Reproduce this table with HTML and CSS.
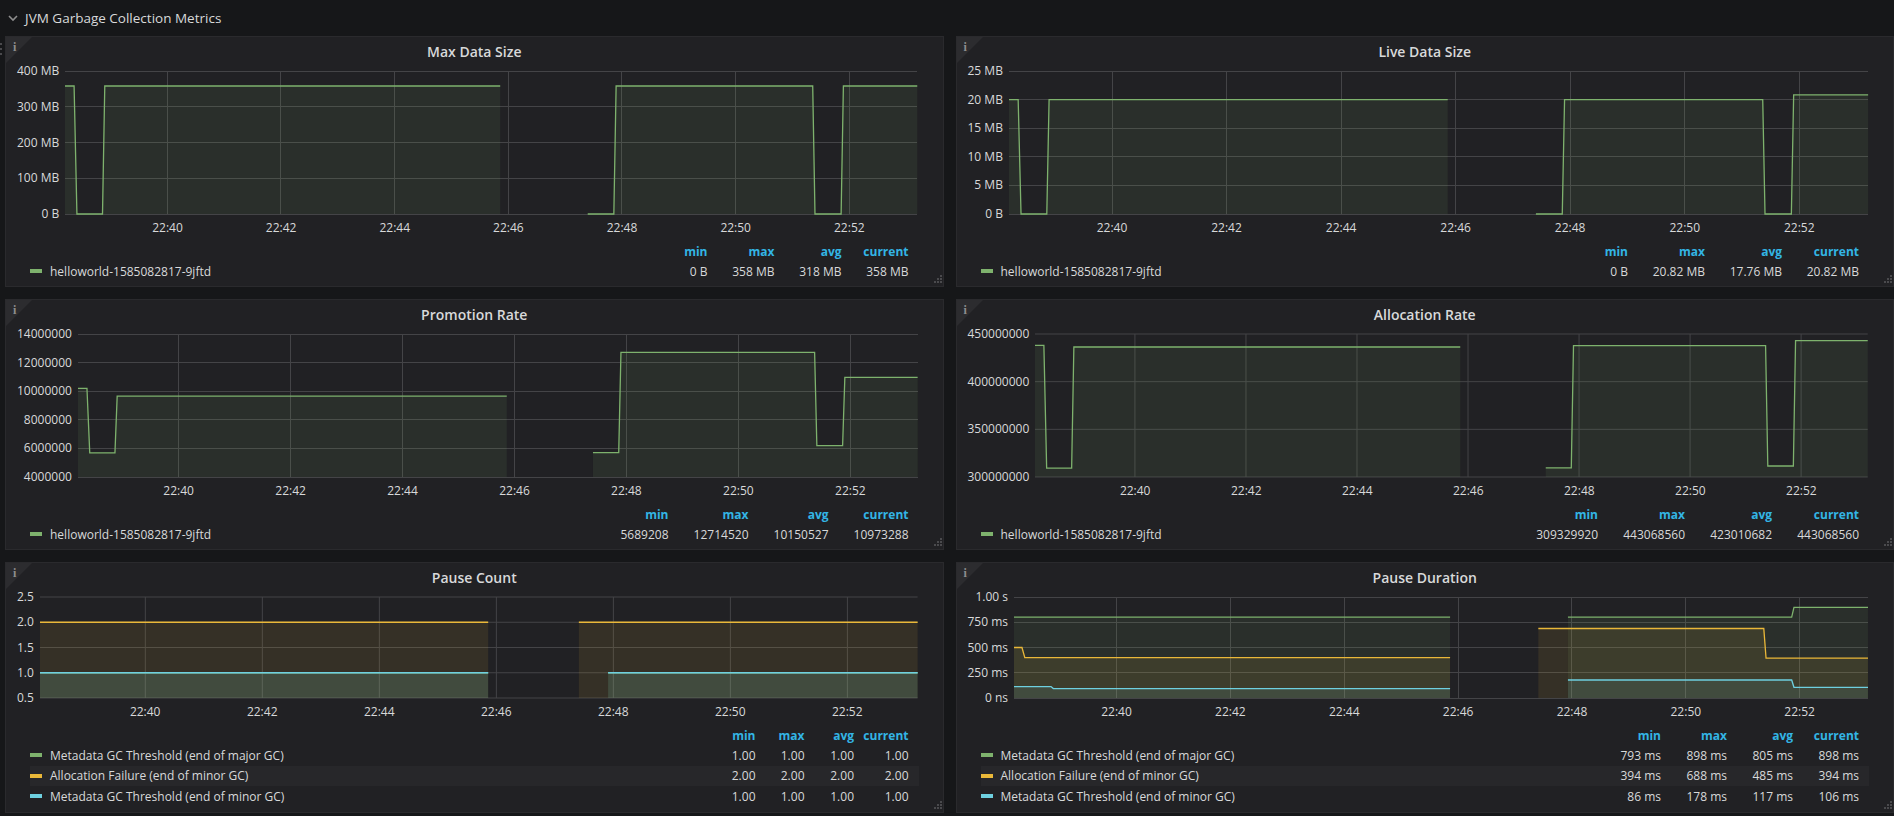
FILE: index.html
```html
<!DOCTYPE html>
<html lang="en">
<head>
<meta charset="utf-8">
<title>JVM Garbage Collection Metrics</title>
<link rel="stylesheet" href="styles.css">
</head>
<body>
<div class="drag-dots"><i></i><i></i><i></i></div>
<div class="row-header">
  <svg class="chevron" width="10" height="7" viewBox="0 0 10 7"><polyline points="1,1 5,5 9,1" fill="none" stroke="#8e8e8e" stroke-width="1.6"/></svg>
  <span class="row-title">JVM Garbage Collection Metrics</span>
</div>

<div class="grid">

  <!-- Max Data Size -->
  <div class="panel">
    <div class="corner"></div><span class="corner-i">i</span>
    <div class="panel-title">Max Data Size</div>
    <div class="chart">
      <div class="yaxis ya143"><span>400 MB</span><span>300 MB</span><span>200 MB</span><span>100 MB</span><span>0 B</span></div>
      <div class="plot">
        <svg class="plot-svg h143" viewBox="0 0 1500 143" preserveAspectRatio="none">
          <path class="grid-lines" d="M0,0H1500M0,35.75H1500M0,71.5H1500M0,107.25H1500M0,143H1500M180,0V143M380,0V143M580,0V143M780,0V143M980,0V143M1180,0V143M1380,0V143"/>
          <path class="fill g" d="M0,143 L0,15 L16,15 L21,143 L66,143 L70,15 L766,15 L766,143 Z M920,143 L966,143 L970,15 L1316,15 L1320,143 L1366,143 L1370,15 L1500,15 L1500,143 Z"/>
          <path class="line g" d="M0,15 L16,15 L21,143 L66,143 L70,15 L766,15 M920,143 L966,143 L970,15 L1316,15 L1320,143 L1366,143 L1370,15 L1500,15"/>
        </svg>
        <div class="xaxis"><span style="left:12%">22:40</span><span style="left:25.333%">22:42</span><span style="left:38.667%">22:44</span><span style="left:52%">22:46</span><span style="left:65.333%">22:48</span><span style="left:78.667%">22:50</span><span style="left:92%">22:52</span></div>
      </div>
    </div>
    <div class="legend w67">
      <div class="lg-row lg-head"><span></span><span>min</span><span>max</span><span>avg</span><span>current</span></div>
      <div class="lg-row"><span class="lg-name"><i class="sw g"></i>helloworld-1585082817-9jftd</span><span>0 B</span><span>358 MB</span><span>318 MB</span><span>358 MB</span></div>
    </div>
    <div class="resize"></div>
  </div>

  <!-- Live Data Size -->
  <div class="panel">
    <div class="corner"></div><span class="corner-i">i</span>
    <div class="panel-title">Live Data Size</div>
    <div class="chart">
      <div class="yaxis ya143"><span>25 MB</span><span>20 MB</span><span>15 MB</span><span>10 MB</span><span>5 MB</span><span>0 B</span></div>
      <div class="plot">
        <svg class="plot-svg h143" viewBox="0 0 1500 143" preserveAspectRatio="none">
          <path class="grid-lines" d="M0,0H1500M0,28.6H1500M0,57.2H1500M0,85.8H1500M0,114.4H1500M0,143H1500M180,0V143M380,0V143M580,0V143M780,0V143M980,0V143M1180,0V143M1380,0V143"/>
          <path class="fill g" d="M0,143 L0,28.6 L16,28.6 L21,143 L66,143 L70,28.6 L766,28.6 L766,143 Z M920,143 L966,143 L970,28.6 L1316,28.6 L1320,143 L1366,143 L1370,23.9 L1500,23.9 L1500,143 Z"/>
          <path class="line g" d="M0,28.6 L16,28.6 L21,143 L66,143 L70,28.6 L766,28.6 M920,143 L966,143 L970,28.6 L1316,28.6 L1320,143 L1366,143 L1370,23.9 L1500,23.9"/>
        </svg>
        <div class="xaxis"><span style="left:12%">22:40</span><span style="left:25.333%">22:42</span><span style="left:38.667%">22:44</span><span style="left:52%">22:46</span><span style="left:65.333%">22:48</span><span style="left:78.667%">22:50</span><span style="left:92%">22:52</span></div>
      </div>
    </div>
    <div class="legend w77">
      <div class="lg-row lg-head"><span></span><span>min</span><span>max</span><span>avg</span><span>current</span></div>
      <div class="lg-row"><span class="lg-name"><i class="sw g"></i>helloworld-1585082817-9jftd</span><span>0 B</span><span>20.82 MB</span><span>17.76 MB</span><span>20.82 MB</span></div>
    </div>
    <div class="resize"></div>
  </div>

  <!-- Promotion Rate -->
  <div class="panel">
    <div class="corner"></div><span class="corner-i">i</span>
    <div class="panel-title">Promotion Rate</div>
    <div class="chart">
      <div class="yaxis ya143"><span>14000000</span><span>12000000</span><span>10000000</span><span>8000000</span><span>6000000</span><span>4000000</span></div>
      <div class="plot">
        <svg class="plot-svg h143" viewBox="0 0 1500 143" preserveAspectRatio="none">
          <path class="grid-lines" d="M0,0H1500M0,28.6H1500M0,57.2H1500M0,85.8H1500M0,114.4H1500M0,143H1500M180,0V143M380,0V143M580,0V143M780,0V143M980,0V143M1180,0V143M1380,0V143"/>
          <path class="fill g" d="M0,143 L0,54.3 L16,54.3 L21,118.8 L66,118.8 L70,62.2 L766,62.2 L766,143 Z M920,143 L920,118.7 L966,118.7 L970,18.4 L1316,18.4 L1320,111.7 L1366,111.7 L1370,43.3 L1500,43.3 L1500,143 Z"/>
          <path class="line g" d="M0,54.3 L16,54.3 L21,118.8 L66,118.8 L70,62.2 L766,62.2 M920,118.7 L966,118.7 L970,18.4 L1316,18.4 L1320,111.7 L1366,111.7 L1370,43.3 L1500,43.3"/>
        </svg>
        <div class="xaxis"><span style="left:12%">22:40</span><span style="left:25.333%">22:42</span><span style="left:38.667%">22:44</span><span style="left:52%">22:46</span><span style="left:65.333%">22:48</span><span style="left:78.667%">22:50</span><span style="left:92%">22:52</span></div>
      </div>
    </div>
    <div class="legend w80">
      <div class="lg-row lg-head"><span></span><span>min</span><span>max</span><span>avg</span><span>current</span></div>
      <div class="lg-row"><span class="lg-name"><i class="sw g"></i>helloworld-1585082817-9jftd</span><span>5689208</span><span>12714520</span><span>10150527</span><span>10973288</span></div>
    </div>
    <div class="resize"></div>
  </div>

  <!-- Allocation Rate -->
  <div class="panel">
    <div class="corner"></div><span class="corner-i">i</span>
    <div class="panel-title">Allocation Rate</div>
    <div class="chart">
      <div class="yaxis ya143"><span>450000000</span><span>400000000</span><span>350000000</span><span>300000000</span></div>
      <div class="plot">
        <svg class="plot-svg h143" viewBox="0 0 1500 143" preserveAspectRatio="none">
          <path class="grid-lines" d="M0,0H1500M0,47.67H1500M0,95.33H1500M0,143H1500M180,0V143M380,0V143M580,0V143M780,0V143M980,0V143M1180,0V143M1380,0V143"/>
          <path class="fill g" d="M0,143 L0,11.4 L16,11.4 L21,134.1 L66,134.1 L70,13 L766,13 L766,143 Z M920,143 L920,133.9 L966,133.9 L970,11.6 L1316,11.6 L1320,132 L1366,132 L1370,6.6 L1500,6.6 L1500,143 Z"/>
          <path class="line g" d="M0,11.4 L16,11.4 L21,134.1 L66,134.1 L70,13 L766,13 M920,133.9 L966,133.9 L970,11.6 L1316,11.6 L1320,132 L1366,132 L1370,6.6 L1500,6.6"/>
        </svg>
        <div class="xaxis"><span style="left:12%">22:40</span><span style="left:25.333%">22:42</span><span style="left:38.667%">22:44</span><span style="left:52%">22:46</span><span style="left:65.333%">22:48</span><span style="left:78.667%">22:50</span><span style="left:92%">22:52</span></div>
      </div>
    </div>
    <div class="legend w87">
      <div class="lg-row lg-head"><span></span><span>min</span><span>max</span><span>avg</span><span>current</span></div>
      <div class="lg-row"><span class="lg-name"><i class="sw g"></i>helloworld-1585082817-9jftd</span><span>309329920</span><span>443068560</span><span>423010682</span><span>443068560</span></div>
    </div>
    <div class="resize"></div>
  </div>

  <!-- Pause Count -->
  <div class="panel">
    <div class="corner"></div><span class="corner-i">i</span>
    <div class="panel-title">Pause Count</div>
    <div class="chart">
      <div class="yaxis ya101"><span>2.5</span><span>2.0</span><span>1.5</span><span>1.0</span><span>0.5</span></div>
      <div class="plot">
        <svg class="plot-svg h101" viewBox="0 0 1500 101" preserveAspectRatio="none">
          <path class="grid-lines" d="M0,0H1500M0,25.25H1500M0,50.5H1500M0,75.75H1500M0,101H1500M180,0V101M380,0V101M580,0V101M780,0V101M980,0V101M1180,0V101M1380,0V101"/>
          <path class="fill g" d="M0,101 L0,75.75 L766,75.75 L766,101 Z M971,101 L971,75.75 L1500,75.75 L1500,101 Z"/>
          <path class="fill y" d="M0,101 L0,25.25 L766,25.25 L766,101 Z M921,101 L921,25.25 L1500,25.25 L1500,101 Z"/>
          <path class="fill c" d="M0,101 L0,75.75 L766,75.75 L766,101 Z M971,101 L971,75.75 L1500,75.75 L1500,101 Z"/>
          <path class="line g" d="M0,75.75 L766,75.75 M971,75.75 L1500,75.75"/>
          <path class="line y" d="M0,25.25 L766,25.25 M921,25.25 L1500,25.25"/>
          <path class="line c" d="M0,75.75 L766,75.75 M971,75.75 L1500,75.75"/>
        </svg>
        <div class="xaxis"><span style="left:12%">22:40</span><span style="left:25.333%">22:42</span><span style="left:38.667%">22:44</span><span style="left:52%">22:46</span><span style="left:65.333%">22:48</span><span style="left:78.667%">22:50</span><span style="left:92%">22:52</span></div>
      </div>
    </div>
    <div class="legend w49">
      <div class="lg-row lg-head"><span></span><span>min</span><span>max</span><span>avg</span><span>current</span></div>
      <div class="lg-row"><span class="lg-name"><i class="sw g"></i>Metadata GC Threshold (end of major GC)</span><span>1.00</span><span>1.00</span><span>1.00</span><span>1.00</span></div>
      <div class="lg-row alt"><span class="lg-name"><i class="sw y"></i>Allocation Failure (end of minor GC)</span><span>2.00</span><span>2.00</span><span>2.00</span><span>2.00</span></div>
      <div class="lg-row"><span class="lg-name"><i class="sw c"></i>Metadata GC Threshold (end of minor GC)</span><span>1.00</span><span>1.00</span><span>1.00</span><span>1.00</span></div>
    </div>
    <div class="resize"></div>
  </div>

  <!-- Pause Duration -->
  <div class="panel">
    <div class="corner"></div><span class="corner-i">i</span>
    <div class="panel-title">Pause Duration</div>
    <div class="chart">
      <div class="yaxis ya101"><span>1.00 s</span><span>750 ms</span><span>500 ms</span><span>250 ms</span><span>0 ns</span></div>
      <div class="plot">
        <svg class="plot-svg h101" viewBox="0 0 1500 101" preserveAspectRatio="none">
          <path class="grid-lines" d="M0,0H1500M0,25.25H1500M0,50.5H1500M0,75.75H1500M0,101H1500M180,0V101M380,0V101M580,0V101M780,0V101M980,0V101M1180,0V101M1380,0V101"/>
          <path class="fill g" d="M0,101 L0,20.2 L766,20.2 L766,101 Z M973,101 L973,20.2 L1366,20.2 L1370,10.3 L1500,10.3 L1500,101 Z"/>
          <path class="fill y" d="M0,101 L0,50.5 L14,50.5 L19,60.6 L766,60.6 L766,101 Z M921,101 L921,31.5 L1317,31.5 L1321,61.2 L1500,61.2 L1500,101 Z"/>
          <path class="fill c" d="M0,101 L0,89.6 L65,89.6 L69,91.6 L766,91.6 L766,101 Z M973,101 L973,83 L1366,83 L1370,90.3 L1500,90.3 L1500,101 Z"/>
          <path class="line g" d="M0,20.2 L766,20.2 M973,20.2 L1366,20.2 L1370,10.3 L1500,10.3"/>
          <path class="line y" d="M0,50.5 L14,50.5 L19,60.6 L766,60.6 M921,31.5 L1317,31.5 L1321,61.2 L1500,61.2"/>
          <path class="line c" d="M0,89.6 L65,89.6 L69,91.6 L766,91.6 M973,83 L1366,83 L1370,90.3 L1500,90.3"/>
        </svg>
        <div class="xaxis"><span style="left:12%">22:40</span><span style="left:25.333%">22:42</span><span style="left:38.667%">22:44</span><span style="left:52%">22:46</span><span style="left:65.333%">22:48</span><span style="left:78.667%">22:50</span><span style="left:92%">22:52</span></div>
      </div>
    </div>
    <div class="legend w66">
      <div class="lg-row lg-head"><span></span><span>min</span><span>max</span><span>avg</span><span>current</span></div>
      <div class="lg-row"><span class="lg-name"><i class="sw g"></i>Metadata GC Threshold (end of major GC)</span><span>793 ms</span><span>898 ms</span><span>805 ms</span><span>898 ms</span></div>
      <div class="lg-row alt"><span class="lg-name"><i class="sw y"></i>Allocation Failure (end of minor GC)</span><span>394 ms</span><span>688 ms</span><span>485 ms</span><span>394 ms</span></div>
      <div class="lg-row"><span class="lg-name"><i class="sw c"></i>Metadata GC Threshold (end of minor GC)</span><span>86 ms</span><span>178 ms</span><span>117 ms</span><span>106 ms</span></div>
    </div>
    <div class="resize"></div>
  </div>

</div>
</body>
</html>
```

FILE: styles.css
```css
* { box-sizing: border-box; }
html, body { margin: 0; padding: 0; }
body {
  background: #161719;
  color: #d8d9da;
  font-family: "Open Sans", "Liberation Sans", Arial, sans-serif;
  width: 1894px;
  height: 816px;
  overflow: hidden;
  position: relative;
}

.drag-dots {
  position: absolute;
  left: 0;
  top: 43px;
  display: flex;
  flex-direction: column;
  gap: 3px;
}
.drag-dots i {
  display: block;
  width: 2px;
  height: 2px;
  background: #4a4a4d;
}

.row-header {
  height: 36px;
  display: flex;
  align-items: center;
  padding-left: 8px;
  padding-bottom: 1px;
}
.chevron { margin-right: 7px; margin-top: 1px; }
.row-title {
  font-size: 13.5px;
  color: #d8d9da;
}

.grid {
  display: grid;
  grid-template-columns: 1fr 1fr;
  column-gap: 12px;
  row-gap: 12px;
  padding-left: 5px;
}

.panel {
  position: relative;
  height: 251px;
  background: #212124;
  border: 1px solid #2a2a2d;
}

.corner {
  position: absolute;
  left: 0;
  top: 0;
  width: 0;
  height: 0;
  border-top: 26px solid #2c2c2f;
  border-right: 26px solid transparent;
}
.corner-i {
  position: absolute;
  left: 7px;
  top: 3px;
  font-family: "Liberation Serif", serif;
  font-weight: bold;
  font-size: 12px;
  color: #8e8e8e;
}

.panel-title {
  height: 34px;
  line-height: 30px;
  text-align: center;
  font-size: 14px;
  font-weight: 600;
  color: #d8d9da;
}

.chart {
  display: flex;
  align-items: flex-start;
}
.yaxis {
  display: flex;
  flex-direction: column;
  justify-content: space-between;
  align-items: flex-end;
  margin-top: -7px;
  padding-left: 11px;
  padding-right: 6px;
  font-size: 12px;
  line-height: 14px;
  color: #d8d9da;
  white-space: nowrap;
}
.ya143 { height: 157px; }
.ya101 { height: 115px; }

.plot {
  flex: 1;
  margin-right: 25px;
  min-width: 0;
}
.plot-svg {
  display: block;
  width: 100%;
  overflow: visible;
}
.h143 { height: 143px; }
.h101 { height: 101px; }

.grid-lines {
  fill: none;
  stroke: #444447;
  stroke-width: 1;
  vector-effect: non-scaling-stroke;
  shape-rendering: crispEdges;
}
.fill { stroke: none; fill-opacity: 0.1; }
.line {
  fill: none;
  stroke-width: 1.3;
  vector-effect: non-scaling-stroke;
  stroke-linejoin: miter;
}
.fill.g { fill: #7eb26d; }
.fill.y { fill: #eab839; }
.fill.c { fill: #6ed0e0; }
.line.g { stroke: #7eb26d; }
.line.y { stroke: #eab839; }
.line.c { stroke: #6ed0e0; }

.xaxis {
  position: relative;
  height: 27px;
  font-size: 12px;
  line-height: 14px;
  color: #d8d9da;
}
.xaxis span {
  position: absolute;
  top: 7px;
  transform: translateX(-50%);
  white-space: nowrap;
}

.legend {
  padding: 0 24px;
  font-size: 12px;
}
.w67 { --w1: 67px; --w2: 67px; --w3: 67px; --w4: 67px; }
.w77 { --w1: 77px; --w2: 77px; --w3: 77px; --w4: 77px; }
.w80 { --w1: 80px; --w2: 80px; --w3: 80px; --w4: 80px; }
.w87 { --w1: 87px; --w2: 87px; --w3: 87px; --w4: 87px; }
.w49 { --w1: 49px; --w2: 49px; --w3: 49.5px; --w4: 54.5px; }
.w66 { --w1: 66px; --w2: 66px; --w3: 66px; --w4: 66px; }

.lg-row {
  display: grid;
  grid-template-columns: 1fr var(--w1) var(--w2) var(--w3) var(--w4);
  align-items: center;
  height: 20.6px;
  padding-right: 10px;
  text-align: right;
  color: #d8d9da;
  white-space: nowrap;
}
.lg-row.lg-head {
  height: 20px;
  color: #33b5e5;
  font-weight: bold;
}
.lg-row.alt { background: #27272a; }
.lg-name {
  display: flex;
  align-items: center;
  text-align: left;
}
.sw {
  display: block;
  width: 12px;
  height: 4px;
  margin-right: 8px;
}
.sw.g { background: #7eb26d; }
.sw.y { background: #eab839; }
.sw.c { background: #6ed0e0; }

.resize {
  position: absolute;
  right: 1px;
  bottom: 1px;
  width: 10px;
  height: 10px;
  background:
    linear-gradient(#4a4a4d, #4a4a4d) 8px 0 / 2px 2px no-repeat,
    linear-gradient(#4a4a4d, #4a4a4d) 5px 3px / 2px 2px no-repeat,
    linear-gradient(#4a4a4d, #4a4a4d) 8px 3px / 2px 2px no-repeat,
    linear-gradient(#4a4a4d, #4a4a4d) 2px 6px / 2px 2px no-repeat,
    linear-gradient(#4a4a4d, #4a4a4d) 5px 6px / 2px 2px no-repeat,
    linear-gradient(#4a4a4d, #4a4a4d) 8px 6px / 2px 2px no-repeat;
}
```
